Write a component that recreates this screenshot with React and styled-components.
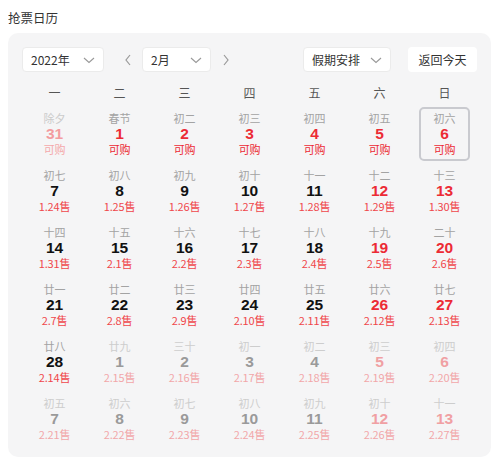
import React from "react";
import styled, { createGlobalStyle } from "styled-components";

const Global = createGlobalStyle`
  body {
    margin: 8px;
    background: #ffffff;
    font-family: "Noto Sans CJK SC", "Liberation Sans", sans-serif;
  }
`;

const Title = styled.div`
  font-size: 12.5px;
  line-height: 20px;
  color: #333;
  margin-bottom: 5px;
`;

const Card = styled.div`
  background: #f5f5f6;
  border-radius: 10px;
  padding: 14px 14px 11px 14px;
`;

const Toolbar = styled.div`
  display: flex;
  align-items: center;
  height: 25px;
`;

const Select = styled.div`
  box-sizing: border-box;
  width: ${(p) => p.$w}px;
  height: 25px;
  background: #fff;
  border: 1px solid #ebebeb;
  border-radius: 4px;
  display: flex;
  align-items: center;
  justify-content: space-between;
  padding: 0 8px 0 8px;
  font-size: 12px;
  color: #333;
`;

const Arrow = styled.button`
  border: none;
  background: none;
  padding: 0;
  margin: 0 ${(p) => p.$mr}px 0 ${(p) => p.$ml}px;
  display: flex;
  align-items: center;
  color: #9a9a9a;
`;

const Spacer = styled.div`
  flex: 1;
`;

const TodayBtn = styled.button`
  box-sizing: border-box;
  width: 69px;
  height: 25px;
  margin-left: 17px;
  background: #fff;
  border: none;
  border-radius: 4px;
  font-family: inherit;
  font-size: 12px;
  color: #333;
  padding: 0;
`;

const Grid = styled.div`
  display: grid;
  grid-template-columns: repeat(7, 65px);
  row-gap: 3px;
`;

const WeekHead = styled.div`
  display: grid;
  grid-template-columns: repeat(7, 65px);
  margin-top: 11px;
  margin-bottom: 4px;
`;

const WeekDay = styled.div`
  text-align: center;
  font-size: 12px;
  line-height: 20px;
  color: #555;
`;

const Cell = styled.div`
  box-sizing: border-box;
  width: 51px;
  height: 54px;
  justify-self: center;
  border: 2px solid ${(p) => (p.$today ? "#c9cacf" : "transparent")};
  border-radius: 5px;
  padding: 2px 0;
  display: flex;
  flex-direction: column;
  align-items: center;
`;

const Lunar = styled.div`
  font-size: 11px;
  line-height: 15px;
  color: ${(p) => p.$c};
`;

const Num = styled.div`
  font-family: "Liberation Sans", Arial, sans-serif;
  font-weight: bold;
  font-size: 15.5px;
  line-height: 16px;
  color: ${(p) => p.$c};
`;

const Sub = styled.div`
  font-size: 11px;
  line-height: 15px;
  color: ${(p) => p.$c};
  letter-spacing: -0.2px;
`;

const Chevron = ({ dir = "down", size = 10, color = "#999" }) => {
  if (dir === "down")
    return (
      <svg width={size + 2} height={size} viewBox="0 0 12 10">
        <polyline points="1,3 6,7.5 11,3" fill="none" stroke={color} strokeWidth="1.1" />
      </svg>
    );
  const pts = dir === "left" ? "6,1 2,6 6,11" : "2,1 6,6 2,11";
  return (
    <svg width="8" height="12" viewBox="0 0 8 12">
      <polyline points={pts} fill="none" stroke={color} strokeWidth="1.2" />
    </svg>
  );
};

const lunarFeb = [
  "春节", "初二", "初三", "初四", "初五", "初六", "初七", "初八", "初九", "初十",
  "十一", "十二", "十三", "十四", "十五", "十六", "十七", "十八", "十九", "二十",
  "廿一", "廿二", "廿三", "廿四", "廿五", "廿六", "廿七", "廿八",
];
const lunarMar = [
  "廿九", "三十", "初一", "初二", "初三", "初四", "初五", "初六", "初七", "初八",
  "初九", "初十", "十一",
];

function buildDays() {
  const days = [];
  days.push({ d: 31, lunar: "除夕", sub: "可购", kind: "past", col: 0 });
  for (let d = 1; d <= 28; d++) {
    let sub;
    if (d <= 6) sub = "可购";
    else {
      const s = d - 14;
      sub = s <= 0 ? `1.${31 + s}售` : `2.${s}售`;
    }
    days.push({ d, lunar: lunarFeb[d - 1], sub, kind: d <= 6 ? "open" : "cur" });
  }
  for (let d = 1; d <= 13; d++) {
    days.push({ d, lunar: lunarMar[d - 1], sub: `2.${d + 14}售`, kind: "next" });
  }
  return days.map((x, i) => ({ ...x, col: i % 7 }));
}

const RED = "#ec2b35";
const SALE = "#f0474b";
const PINK = "#f2a7a9";

function colors(day) {
  const weekend = day.col >= 5;
  switch (day.kind) {
    case "past":
      return { l: "#cbcbcb", n: "#f39ca0", s: "#f4a9ab" };
    case "open":
      return { l: "#a3a3a3", n: RED, s: RED };
    case "cur":
      return { l: "#a3a3a3", n: weekend ? RED : "#111", s: SALE };
    default:
      return { l: "#cdcdcd", n: weekend ? "#f0a0a3" : "#9a9a9a", s: PINK };
  }
}

export default function App() {
  const days = buildDays();
  return (
    <>
      <Global />
      <Title>抢票日历</Title>
      <Card>
        <Toolbar>
          <Select $w={82}>
            <span>2022年</span>
            <Chevron />
          </Select>
          <Arrow $ml={20} $mr={10}>
            <Chevron dir="left" />
          </Arrow>
          <Select $w={69}>
            <span>2月</span>
            <Chevron />
          </Select>
          <Arrow $ml={11} $mr={0}>
            <Chevron dir="right" />
          </Arrow>
          <Spacer />
          <Select $w={88}>
            <span>假期安排</span>
            <Chevron />
          </Select>
          <TodayBtn>返回今天</TodayBtn>
        </Toolbar>
        <WeekHead>
          {["一", "二", "三", "四", "五", "六", "日"].map((w) => (
            <WeekDay key={w}>{w}</WeekDay>
          ))}
        </WeekHead>
        <Grid>
          {days.map((day, i) => {
            const c = colors(day);
            return (
              <Cell key={i} $today={day.kind === "open" && day.d === 6}>
                <Lunar $c={c.l}>{day.lunar}</Lunar>
                <Num $c={c.n}>{day.d}</Num>
                <Sub $c={c.s}>{day.sub}</Sub>
              </Cell>
            );
          })}
        </Grid>
      </Card>
    </>
  );
}
